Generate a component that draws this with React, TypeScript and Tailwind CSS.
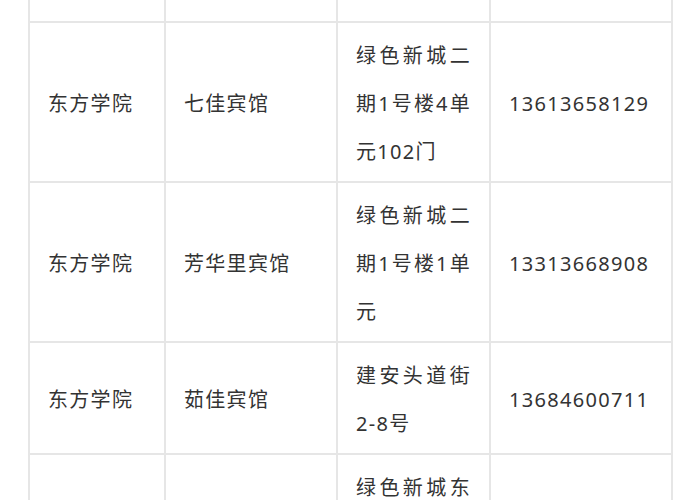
import React from "react";

const rows = [
  { school: "东方学院", hotel: "七佳宾馆", addr: "绿色新城二期1号楼4单元102门", phone: "13613658129" },
  { school: "东方学院", hotel: "芳华里宾馆", addr: "绿色新城二期1号楼1单元", phone: "13313668908" },
  { school: "东方学院", hotel: "茹佳宾馆", addr: "建安头道街2-8号", phone: "13684600711" },
  { school: "东方学院", hotel: "悦家宾馆", addr: "绿色新城东区3号楼2单元", phone: "13945071186" },
];

const cell = "border-2 border-[#e6e6e6] px-[18px] align-middle";

export default function App() {
  return (
    <div
      className="w-[700px] h-[500px] overflow-hidden bg-white pl-[28px] text-[20px] text-[#333333] tracking-[1.3px]"
      style={{ fontFamily: '"Noto Sans", "Noto Sans CJK SC", sans-serif' }}
    >
      <table className="table-fixed border-collapse w-[643px]">
        <colgroup>
          <col className="w-[136px]" />
          <col className="w-[172px]" />
          <col className="w-[153px]" />
          <col className="w-[182px]" />
        </colgroup>
        <tbody>
          <tr className="h-[22px]">
            <td className={`${cell} border-t-0`} />
            <td className={`${cell} border-t-0`} />
            <td className={`${cell} border-t-0`} />
            <td className={`${cell} border-t-0`} />
          </tr>
          {rows.map((r, i) => (
            <tr key={i}>
              <td className={`${cell} pt-[3px]`}>{r.school}</td>
              <td className={`${cell} pt-[3px]`}>{r.hotel}</td>
              <td className={`${cell} pt-[9px] pb-[5px] leading-[48px] text-justify`}>{r.addr}</td>
              <td className={`${cell} pt-[3px]`}>{r.phone}</td>
            </tr>
          ))}
        </tbody>
      </table>
    </div>
  );
}
